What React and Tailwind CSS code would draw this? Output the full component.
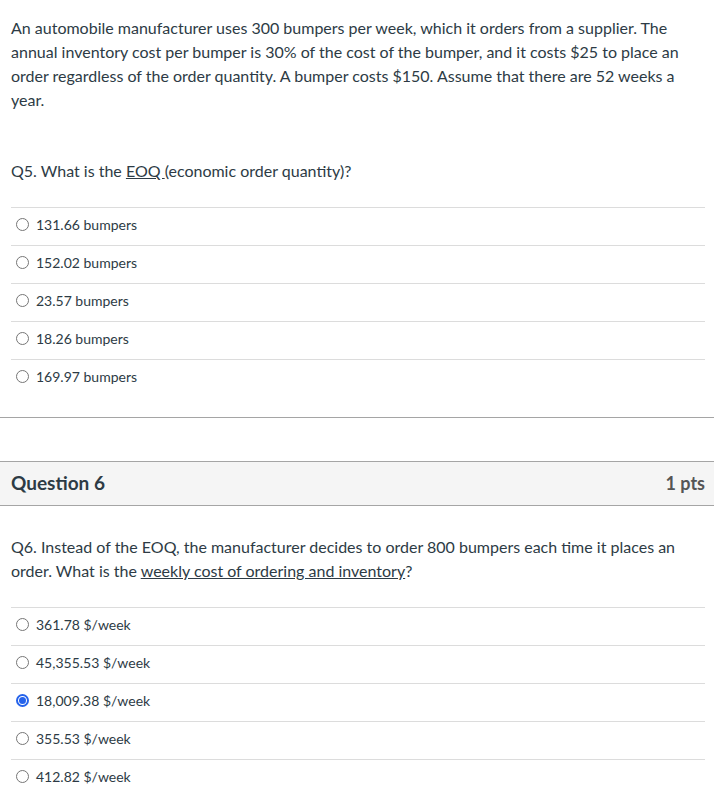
import React from 'react';

const q5 = ['131.66 bumpers', '152.02 bumpers', '23.57 bumpers', '18.26 bumpers', '169.97 bumpers'];
const q6 = ['361.78 $/week', '45,355.53 $/week', '18,009.38 $/week', '355.53 $/week', '412.82 $/week'];

const Radio = ({ checked }) =>
  checked ? (
    <span className="w-[13px] h-[13px] rounded-full border-2 border-[#2563eb] flex items-center justify-center shrink-0">
      <span className="w-[7px] h-[7px] rounded-full bg-[#2563eb]" />
    </span>
  ) : (
    <span className="w-[13px] h-[13px] rounded-full border border-[#767676] shrink-0" />
  );

const Answers = ({ items, selected }) => (
  <div className="ml-[11px] mr-[9px]">
    {items.map((a, i) => (
      <div key={i} className="h-[38px] border-t border-[#dcdcdc] flex items-center gap-[7px] pl-[5px] pb-[4px]">
        <Radio checked={i === selected} />
        <span className="text-[14px] text-[#2d3b45]">{a}</span>
      </div>
    ))}
  </div>
);

export default function App() {
  return (
    <div className="w-[714px] bg-white text-[#2d3b45]" style={{ fontFamily: 'Lato, "Noto Sans", sans-serif' }}>
      <p className="px-[11px] pt-[16px] text-[16px] leading-[24px]">
        An automobile manufacturer uses 300 bumpers per week, which it orders from a supplier. The annual inventory
        cost per bumper is 30% of the cost of the bumper, and it costs $25 to place an order regardless of the order
        quantity. A bumper costs $150. Assume that there are 52 weeks a year.
      </p>
      <p className="px-[11px] mt-[47px] mb-[24px] text-[16px] leading-[24px]">
        Q5. What is the <span className="underline">EOQ </span>(economic order quantity)?
      </p>
      <Answers items={q5} />
      <div className="h-[20px]" />
      <div className="border-t border-[#a5a5a5] h-[44px]" />
      <div className="bg-[#f5f5f5] border-y border-[#a5a5a5] h-[45px] pr-[9px] pl-[11px] flex items-center justify-between">
        <span className="text-[19px] font-bold">Question 6</span>
        <span className="text-[18px] font-bold text-[#555]">1 pts</span>
      </div>
      <p className="px-[11px] mt-[29px] mb-[24px] text-[16px] leading-[24px]">
        Q6. Instead of the EOQ, the manufacturer decides to order 800 bumpers each time it places an order. What is
        the <span className="underline">weekly cost of ordering and inventory</span>?
      </p>
      <Answers items={q6} selected={2} />
    </div>
  );
}
